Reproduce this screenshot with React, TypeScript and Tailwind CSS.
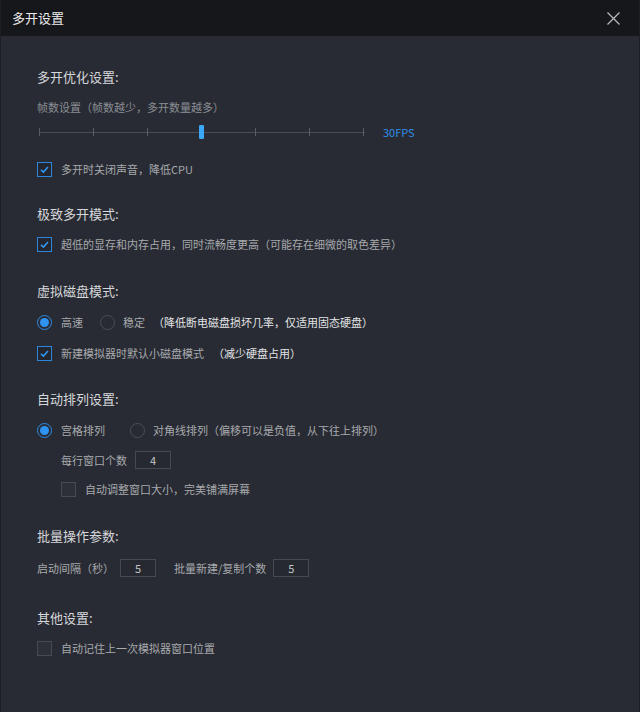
import React from "react"

function Check({ checked }: { checked?: boolean }) {
  return checked ? (
    <span className="w-[15px] h-[15px] shrink-0 border border-[#2b86dc] bg-[#23262e] flex items-center justify-center">
      <svg width="11" height="11" viewBox="0 0 11 11">
        <path d="M2 5.8 L4.4 8 L9 3" fill="none" stroke="#3296f0" strokeWidth="1.6" />
      </svg>
    </span>
  ) : (
    <span className="block w-[15px] h-[15px] shrink-0 border border-[#474a52] bg-[#2d3038]" />
  )
}

function Radio({ checked, className = "" }: { checked?: boolean; className?: string }) {
  return checked ? (
    <span className={"w-[15px] h-[15px] shrink-0 rounded-full border border-[#2b8be6] flex items-center justify-center " + className}>
      <span className="block w-[9px] h-[9px] rounded-full bg-[#2f93f2]" />
    </span>
  ) : (
    <span className={"block w-[15px] h-[15px] shrink-0 rounded-full border border-[#4b4e56] " + className} />
  )
}

function Box({ value, className = "" }: { value: string; className?: string }) {
  return (
    <span className={"w-[36px] h-[18px] border border-[#464950] bg-[#262930] flex items-center justify-center text-[11px] text-[#c4c6ca] " + className}>
      {value}
    </span>
  )
}

function Title({ children, className }: { children: React.ReactNode; className: string }) {
  return <div className={"h-[20px] flex items-center text-[13px] text-[#d6d7da] " + className}>{children}</div>
}

export default function App() {
  const ticks = [0, 54, 108, 216, 270, 324]
  return (
    <div className="w-[640px] h-[712px] bg-[#282b33] border-x border-[#1c1e23] font-['Noto_Sans_CJK_SC',sans-serif] text-[11px] text-[#a7a9ad] overflow-hidden">
      {/* header */}
      <div className="h-[36px] bg-[#16171b] flex items-center justify-between pl-[11px] pr-[19px]">
        <span className="text-[13px] text-[#ececec]">多开设置</span>
        <svg width="13" height="13" viewBox="0 0 13 13">
          <path d="M0.5 0.5 L12.5 12.5 M12.5 0.5 L0.5 12.5" stroke="#b5b7bb" strokeWidth="1.3" />
        </svg>
      </div>

      <div className="pl-[36px] pt-[31px]">
        <Title className="">多开优化设置:</Title>

        <div className="mt-[12px] h-[16px] flex items-center text-[#8b8e94]">帧数设置（帧数越少，多开数量越多）</div>

        <div className="mt-[9px] h-[16px] flex items-center">
          <div className="relative w-[326px] h-[16px] ml-[2px]">
            <div className="absolute left-0 right-0 top-[8px] h-px bg-[#4a4d55]" />
            {ticks.map((t) => (
              <div key={t} className="absolute top-[4px] w-px h-[8px] bg-[#595c64]" style={{ left: t }} />
            ))}
            <div className="absolute left-[160px] top-[1px] w-[5px] h-[14px] rounded-[1px] bg-[#3aa8f5]" />
          </div>
          <span className="ml-[18px] text-[11px] text-[#2f8fe6]">30FPS</span>
        </div>

        <div className="mt-[21px] h-[16px] flex items-center gap-[9px]">
          <Check checked />
          <span>多开时关闭声音，降低CPU</span>
        </div>

        <Title className="mt-[27px]">极致多开模式:</Title>
        <div className="mt-[12px] h-[16px] flex items-center gap-[9px]">
          <Check checked />
          <span>超低的显存和内存占用，同时流畅度更高（可能存在细微的取色差异）</span>
        </div>

        <Title className="mt-[29px]">虚拟磁盘模式:</Title>
        <div className="mt-[13px] h-[16px] flex items-center">
          <Radio checked />
          <span className="ml-[9px]">高速</span>
          <Radio className="ml-[17px]" />
          <span className="ml-[8px]">稳定</span>
          <span className="ml-[8px] text-[#e2e3e5]">（降低断电磁盘损坏几率，仅适用固态硬盘）</span>
        </div>
        <div className="mt-[15px] h-[16px] flex items-center gap-[9px]">
          <Check checked />
          <span>新建模拟器时默认小磁盘模式</span>
          <span className="text-[#e2e3e5]">（减少硬盘占用）</span>
        </div>

        <Title className="mt-[28px]">自动排列设置:</Title>
        <div className="mt-[13px] h-[16px] flex items-center">
          <Radio checked />
          <span className="ml-[9px]">宫格排列</span>
          <Radio className="ml-[25px]" />
          <span className="ml-[8px]">对角线排列（偏移可以是负值，从下往上排列）</span>
        </div>
        <div className="mt-[12px] h-[20px] flex items-center pl-[24px]">
          <span>每行窗口个数</span>
          <Box value="4" className="ml-[8px]" />
        </div>
        <div className="mt-[11px] h-[16px] flex items-center gap-[9px] pl-[24px]">
          <Check />
          <span>自动调整窗口大小，完美铺满屏幕</span>
        </div>

        <Title className="mt-[29px]">批量操作参数:</Title>
        <div className="mt-[12px] h-[20px] flex items-center">
          <span>启动间隔（秒）</span>
          <Box value="5" className="ml-[6px]" />
          <span className="ml-[18px]">批量新建/复制个数</span>
          <Box value="5" className="ml-[7px]" />
        </div>

        <Title className="mt-[30px]">其他设置:</Title>
        <div className="mt-[12px] h-[16px] flex items-center gap-[9px]">
          <Check />
          <span>自动记住上一次模拟器窗口位置</span>
        </div>
      </div>
    </div>
  )
}
